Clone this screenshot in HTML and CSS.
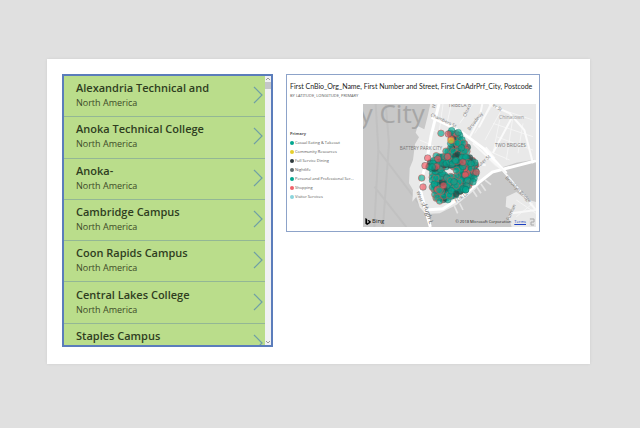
FILE: index.html
```html
<!DOCTYPE html>
<html lang="en">
<head>
  <meta charset="UTF-8" />
  <meta name="viewport" content="width=device-width, initial-scale=1" />
  <title>Campuses</title>
  <link rel="stylesheet" href="styles.css">
</head>
<body>
  <main class="screen">
    <section class="gallery" aria-label="Campuses">
      <ul class="gallery-items" id="campuses"></ul>
      <div class="scrollbar">
        <svg viewBox="0 0 6 6"><path d="M1 4l2-2 2 2" /></svg>
        <div class="thumb"></div>
        <svg class="down" viewBox="0 0 6 6"><path d="M1 2l2 2 2-2" /></svg>
      </div>
    </section>

    <section class="tile">
      <h2>First CnBio_Org_Name, First Number and Street, First CnAdrPrf_City, Postcode</h2>
      <p class="subtitle">BY LATITUDE, LONGITUDE, PRIMARY</p>
      <div class="tile-body">
        <div class="legend">
          <h3>Primary</h3>
          <ul>
            <li><span class="dot teal"></span>Casual Eating &amp; Takeout</li>
            <li><span class="dot yellow"></span>Community Resources</li>
            <li><span class="dot dark"></span>Full Service Dining</li>
            <li><span class="dot gray"></span>Nightlife</li>
            <li><span class="dot teal"></span>Personal and Professional Ser...</li>
            <li><span class="dot red"></span>Shopping</li>
            <li><span class="dot sky"></span>Visitor Services</li>
          </ul>
        </div>
        <div class="map">
          <svg class="map-canvas" viewBox="10 12 519 369" preserveAspectRatio="none">
            <!-- water -->
            <rect class="water" x="10" y="12" width="519" height="369" />
            <path class="current" d="M48 12L56 150 44 381M78 12L88 130 70 381M56 150L200 340M44 260L140 381" />
            <!-- land -->
            <path class="land" d="M212 12L204 48 194 88 174 78 168 98 178 112 166 132 160 180 150 205 148 250 160 270 158 305 170 290 180 322 198 342 240 340 290 315 345 270 380 228 400 218 420 205 470 188 529 178V12Z" />
            <path class="land" d="M440 290L470 276 500 298 529 306V381H456L446 350 458 330 438 320Z" />
            <path class="pier" d="M340 272l12 18M352 262l12 18M364 252l14 20M284 318l10 22M300 310l10 20M376 240l18 14" />
            <!-- streets -->
            <path class="block" d="M250 12L238 100M275 12L262 70M300 70L340 12M345 100L400 12M376 120L424 32M420 60L400 160M460 50L440 180M490 70L475 160M400 70L520 110M410 110L520 150M380 150L450 180M430 30L520 60M220 90L330 130M180 120L250 150M340 130L410 200M470 300L529 340M470 350L520 310" />
            <path class="street" d="M330 112L358 60 368 12M392 16L358 82M520 190L494 90 450 40 388 12M405 176L378 142M400 158L456 54M345 190L378 196" />
            <path class="road" d="M238 12L214 108 202 178 188 230 182 270 198 330 212 381" />
            <path class="road" d="M216 52L300 92 372 146 440 220" />
            <path class="road" d="M198 330L250 326 300 294 350 254 398 216 529 182" />
            <path class="bridge" d="M340 130L430 212 529 330" />
            <path class="bridge" d="M456 340L529 330" />
            <!-- labels -->
            <text class="city" x="0" y="68">y City</text>
            <text class="area" x="120" y="149">BATTERY PARK CITY</text>
            <text class="area" x="406" y="142">TWO BRIDGES</text>
            <text class="place" x="418" y="56">Chinatown</text>
            <text class="area" x="266" y="20">TRIBECA</text>
            <text class="name" transform="translate(212 48) rotate(25)">Chambers St</text>
            <text class="name" transform="translate(318 52) rotate(-66)">Church</text>
            <text class="name" transform="translate(330 92) rotate(-52)">Broadway</text>
            <text class="name" transform="translate(398 18) rotate(32)">er St</text>
            <text class="name" transform="translate(226 26) rotate(-80)">W</text>
            <text class="name" transform="translate(352 208) rotate(-42)">Water St</text>
            <text class="name" transform="translate(436 234) rotate(46)">Brooklyn Bridge</text>
            <text class="name" transform="translate(170 276) rotate(68)">West St</text>
            <text class="hugh" transform="translate(190 314) rotate(72)">Hugh L</text>
            <text class="name" transform="translate(290 308) rotate(-34)">FDR Dr</text>
            <text class="name" transform="translate(448 362) rotate(-66)">Furman</text>
            <g id="bubbles"></g>
          </svg>
          <div class="map-footer">
            <span class="bing">
              <svg viewBox="0 0 12 16"><path d="M0 0l4 2v10l5-3-3-2-1-3 7 3v4l-8 5-4-3z" /></svg>
              Bing
            </span>
            <span class="credit">© 2018 Microsoft Corporation <a href="#terms">Terms</a></span>
            <svg class="grip" viewBox="0 0 6 8"><path d="M1 1h4v3H2v3h3" /></svg>
          </div>
        </div>
      </div>
    </section>
  </main>

  <script src="script.js"></script>
</body>
</html>
```

FILE: styles.css
```css
:root {
  --page: #e0e0e0;
  --item: #badd8b;
  --line: #93b795;
  --border: #5b7dbb;
  --teal: #01a68f;
  --red: #f0616a;
}
* {
  margin: 0;
  padding: 0;
  box-sizing: border-box;
}
body {
  font-family: "Open Sans", "Noto Sans", sans-serif;
  background: var(--page);
  padding: 59px 50px 64px 47px;
  color: #333;
}
ul {
  list-style: none;
}
.screen {
  display: grid;
  grid-template-columns: 211fr 254fr;
  align-items: start;
  gap: 13px;
  background: #fff;
  padding: 15px 50px 17px 15px;
  box-shadow: 0 0 3px rgba(0,0,0,0.08);
}
.gallery {
  display: flex;
  height: 273px;
  border: 2px solid var(--border);
  overflow: hidden;
}
.gallery-items {
  flex: 1;
  display: grid;
  grid-template-rows: repeat(7, 1fr);
  height: 289px;
}
.item {
  display: flex;
  align-items: center;
  justify-content: space-between;
  padding: 0 2px 2px 12px;
  background: var(--item);
  border-bottom: 1px solid var(--line);
}
.item h3 {
  font-size: 11px;
  line-height: 16px;
  font-weight: 600;
  color: #2f3d1f;
}
.item p {
  font-size: 9px;
  line-height: 14px;
  color: #3c4a28;
}
.next {
  width: 10px;
  height: 18px;
  border: none;
  background: none;
  cursor: pointer;
}
.next svg {
  display: block;
  width: 100%;
  height: 100%;
  fill: none;
  stroke: #6f9fa6;
  stroke-width: 1.2;
}
.scrollbar {
  display: flex;
  flex-direction: column;
  width: 6px;
  background: #f0f1f3;
}
.scrollbar svg {
  height: 6px;
  fill: none;
  stroke: #999;
}
.thumb {
  height: 7px;
  background: #c4c6c9;
}
.scrollbar .down {
  margin-top: auto;
}
.tile {
  min-width: 0;
  padding: 6px 3px 4px;
  border: 1px solid #8da3c9;
}
.tile h2 {
  font-family: Lato, sans-serif;
  font-size: 7px;
  line-height: 10px;
  font-weight: 400;
  white-space: nowrap;
  color: #222;
}
.subtitle {
  font-family: "Noto Sans", sans-serif;
  font-size: 4px;
  line-height: 9px;
  color: #666;
}
.tile-body {
  display: grid;
  grid-template-columns: 73fr 173fr;
  margin-top: 4px;
}
.legend {
  min-width: 0;
  padding-top: 25px;
  font-size: 4px;
  line-height: 9px;
  color: #555;
}
.legend h3 {
  font-size: 4px;
  line-height: 9px;
}
.legend li {
  display: flex;
  align-items: center;
  gap: 1px;
  white-space: nowrap;
}
.dot {
  width: 4px;
  height: 4px;
  border-radius: 50%;
}
.teal { background: var(--teal); }
.yellow { background: #e6cf2c; }
.dark { background: #2f3a3d; }
.gray { background: #5f6b6d; }
.red { background: var(--red); }
.sky { background: #8ad4dc; }
.map {
  position: relative;
  min-width: 0;
  height: 123px;
}
.map-canvas {
  display: block;
  width: 100%;
  height: 100%;
}
.water { fill: #c8c8c8; }
.current {
  fill: none;
  stroke: #c1c1c1;
  stroke-width: 6;
}
.land { fill: #e9e9e9; }
.pier, .block, .street, .road, .bridge { fill: none; }
.pier {
  stroke: #e4e4e4;
  stroke-width: 5;
}
.block {
  stroke: #f4f4f4;
  stroke-width: 3;
}
.street {
  stroke: #fafafa;
  stroke-width: 6;
}
.road {
  stroke: #fff;
  stroke-width: 9;
}
.bridge {
  stroke: #f8f8f8;
  stroke-width: 6;
}
.city {
  font-size: 78px;
  fill: #a6a6a6;
}
.area {
  font-size: 14px;
  fill: #777;
}
.place {
  font-size: 15px;
  fill: #999;
}
.name {
  font-size: 14px;
  fill: #777;
}
.hugh {
  font-size: 19px;
  fill: #666;
}
.bubble {
  fill-opacity: 0.65;
  stroke: #1d5a55;
  stroke-opacity: 0.5;
  stroke-width: 2;
}
.bubble.alert {
  stroke: #d9534f;
  stroke-opacity: 0.8;
}
.map-footer {
  position: absolute;
  right: 1px;
  bottom: 0;
  left: 2px;
  display: flex;
  align-items: center;
  font-size: 4px;
  line-height: 8px;
  color: #222;
}
.bing {
  display: flex;
  align-items: center;
  gap: 1px;
  margin-right: auto;
  padding-bottom: 2px;
  font-size: 6px;
}
.bing svg {
  width: 6px;
  height: 7px;
}
.credit a {
  margin-left: 2px;
  color: #1a3fc0;
}
.grip {
  width: 6px;
  height: 8px;
  margin-left: 3px;
  background: #e4e4e4;
  fill: none;
  stroke: #aaa;
}
```

FILE: script.js
```js
const campuses = [
  'Alexandria Technical and',
  'Anoka Technical College',
  'Anoka-',
  'Cambridge Campus',
  'Coon Rapids Campus',
  'Central Lakes College',
  'Staples Campus'
];

document.getElementById('campuses').innerHTML = campuses.map(name => `
  <li class="item">
    <div><h3>${name}</h3><p>North America</p></div>
    <button class="next" aria-label="Open ${name}"><svg viewBox="0 0 10 18"><path d="M1 1l8 8-8 8" /></svg></button>
  </li>`).join('');

const teal = '#01a68f';
const red = '#f0525c';
const dark = '#24403f';

// y, left, right of each band of places
const bands = [
  [102, 270, 304], [116, 276, 308], [130, 274, 316], [144, 272, 322],
  [158, 260, 324], [172, 228, 330], [186, 214, 344], [198, 206, 348],
  [210, 218, 252], [210, 292, 350], [222, 218, 256], [222, 292, 350], [234, 218, 346],
  [246, 218, 342], [258, 218, 332], [270, 224, 322], [284, 226, 294],
  [296, 230, 268]
];

// places that stand apart from the crowd
const single = [
  [244, 100, teal], [276, 92, teal], [266, 102, red], [274, 121, '#e6cf2c'],
  [204, 174, red], [196, 197, red], [186, 234, teal], [190, 261, red],
  [264, 170, red], [240, 303, teal], [350, 217, red], [318, 269, teal]
];

let seed = 7;
function random() {
  seed = (seed * 16807) % 2147483647;
  return seed / 2147483647;
}

const places = [];
bands.forEach(([y, left, right]) => {
  for (let x = left; x <= right; x += 5) {
    const pick = random();
    const color = pick < 0.8 ? teal : pick < 0.9 ? red : dark;
    places.push([x + random() * 4 - 2, y + random() * 10 - 5, color]);
  }
});
places.sort(() => random() - 0.5);

document.getElementById('bubbles').innerHTML = places.concat(single)
  .map(([x, y, color], i) => `<circle class="bubble${i % 3 ? '' : ' alert'}" cx="${x}" cy="${y}" r="10" fill="${color}" />`)
  .join('');
```
